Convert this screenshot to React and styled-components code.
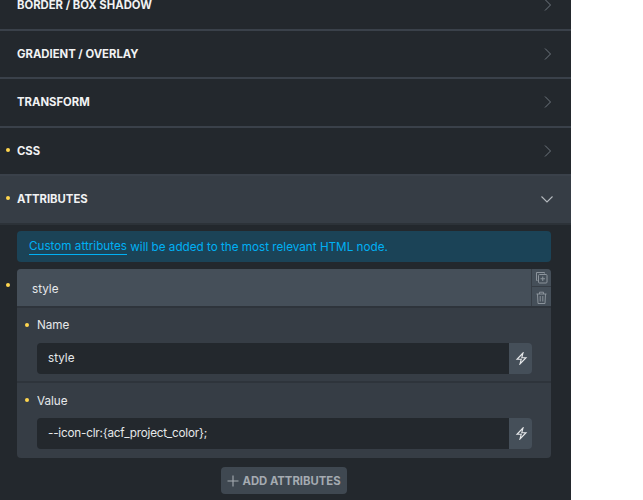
import React from "react";
import styled, { createGlobalStyle } from "styled-components";

const Global = createGlobalStyle`
  html, body { margin: 0; padding: 0; background: #fff; height: 500px; overflow: hidden; }
  body { font-family: Inter, "Liberation Sans", sans-serif; }
  * { box-sizing: border-box; }
`;
const Panel = styled.div`
  width: 571px; height: 500px; background: #23282d; overflow: hidden;
  display: flex; flex-direction: column;
`;
const Sections = styled.div`margin-top: -18px; display: flex; flex-direction: column;`;
const Row = styled.div`
  position: relative; height: 48.5px; flex: none; display: flex; align-items: center; justify-content: space-between;
  padding: 0 17px;
  background: ${p => (p.$open ? "#363d45" : "#23282d")};
  border-bottom: 2px solid ${p => (p.$open ? "#2c3238" : "#3a414a")};
`;
const RowTitle = styled.span`
  font-size: 11.3px; font-weight: 700; letter-spacing: 0; color: #f1f2f3; text-transform: uppercase;
`;
const Dot = styled.i`
  position: absolute; left: ${p => p.$left ?? 6}px; top: ${p => p.$top ?? "50%"};
  width: 4px; height: 4px; margin-top: -3px; border-radius: 50%; background: #ffd64f;
`;
const Body = styled.div`padding: 6px 20px 0 17px; display: flex; flex-direction: column; align-items: stretch;`;
const Notice = styled.div`
  height: 31px; border-radius: 4px; background: #1b4357; color: #00b0f4; font-size: 11.7px;
  padding: 1px 12px 0; display: flex; align-items: center; white-space: pre;
`;
const NoticeLink = styled.span`border-bottom: 1px solid #00b0f4; line-height: 15px;`;
const Card = styled.div`position: relative; margin-top: 7px; border-radius: 4px; background: #363d45; height: 189px;`;
const CardHead = styled.div`
  height: 39px; display: flex; background: #454f59; border-radius: 4px 4px 0 0;
  border-bottom: 2px solid #2e343b;
`;
const CardTitle = styled.div`
  flex: 1; font-size: 11.7px; color: #e6e8ea; padding: 3px 15px 0; display: flex; align-items: center;
`;
const Actions = styled.div`width: 20px; display: flex; flex-direction: column; border-left: 1px solid #363d45;`;
const Action = styled.div`
  flex: 1; display: flex; align-items: center; justify-content: center; color: #8b939b;
  padding-top: 1px;
  & + & { border-top: 1px solid #363d45; padding-top: 2px; }
`;
const Field = styled.div`
  position: relative; padding: 0 19px 0 20px; height: ${p => p.$h}px;
  border-top: ${p => (p.$line ? "2px solid #2e343b" : "0")};
`;
const Label = styled.div`
  font-size: 11.7px; color: #e6e8ea; height: 34px; margin-bottom: 1px; display: flex; align-items: center;
  padding-top: ${p => p.$shift ?? 0}px;
`;
const InputRow = styled.div`display: flex; height: 31px;`;
const Input = styled.div`
  flex: 1; background: #23282d; border-radius: 4px 0 0 4px; color: #e6e8ea; font-size: 11.7px;
  letter-spacing: ${p => (p.$tight ? "-0.2px" : "0")};
  padding: 0 11px; display: flex; align-items: center;
`;
const Bolt = styled.div`
  width: 23px; background: #454f59; border-radius: 0 4px 4px 0; color: #e6e8ea;
  padding-left: 1px; display: flex; align-items: center; justify-content: center;
`;
const AddWrap = styled.div`display: flex; justify-content: center; margin-top: 9px;`;
const AddButton = styled.div`
  width: 126px; height: 27px; background: #3f4851; border-radius: 4px; display: flex; align-items: center; justify-content: center; gap: 3px;
  color: #a5abb1; font-size: 11.3px; font-weight: 700; padding-top: 1px;
`;
const Icon = styled.svg`display: block; fill: none; stroke: currentColor;`;
const Chevron = styled(Icon)`color: #6f777f;`;
const OpenChevron = styled(Icon)`color: #b5babf;`;

const Right = () => (
  <Chevron width="14" height="14" viewBox="0 0 14 14" strokeWidth="1"><path d="M5 1.5 10.5 7 5 12.5" /></Chevron>
);
const Down = () => (
  <OpenChevron width="14" height="14" viewBox="0 0 14 14" strokeWidth="1.1"><path d="M1.5 4.5 7 10l5.5-5.5" /></OpenChevron>
);
const BoltIcon = () => (
  <Icon width="13" height="13" viewBox="0 0 13 13" strokeWidth="1.1" strokeLinejoin="miter">
    <path d="M8 1 2 7.3h4.2L5 12l6-6.3H6.8L8 1Z" />
  </Icon>
);
const CopyIcon = () => (
  <Icon width="13" height="13" viewBox="0 0 13 13" strokeWidth="1">
    <path d="M2.5 9.5h-1v-8h8v1" />
    <rect x="3.5" y="3.5" width="8.5" height="8.5" rx="1" />
    <path d="M7.75 5.5v4.5M5.5 7.75H10" />
  </Icon>
);
const TrashIcon = () => (
  <Icon width="13" height="13" viewBox="0 0 13 13" strokeWidth="1">
    <path d="M1.5 3h10M4.5 3V1.2h4V3M2.5 3l.5 9.5h7l.5-9.5M5.2 5v5.5M7.8 5v5.5" />
  </Icon>
);
const Plus = () => (
  <Icon width="12" height="12" viewBox="0 0 12 12" strokeWidth="1.1"><path d="M6 .5v11M.5 6h11" /></Icon>
);

const titles = [
  ["Border / Box Shadow", false],
  ["Gradient / Overlay", false],
  ["Transform", false],
  ["CSS", true],
];

export default function App() {
  return (
    <>
      <Global />
      <Panel>
        <Sections>
          {titles.map(([t, dot]) => (
            <Row key={t}>
              {dot && <Dot />}
              <RowTitle>{t}</RowTitle>
              <Right />
            </Row>
          ))}
          <Row $open>
            <Dot />
            <RowTitle>Attributes</RowTitle>
            <Down />
          </Row>
        </Sections>
        <Body>
          <Notice>
            <NoticeLink>Custom attributes</NoticeLink> will be added to the most relevant HTML node.
          </Notice>
          <Card>
            <Dot $left={-11} $top="17px" />
            <CardHead>
              <CardTitle>style</CardTitle>
              <Actions>
                <Action><CopyIcon /></Action>
                <Action><TrashIcon /></Action>
              </Actions>
            </CardHead>
            <Field $h={73}>
              <Dot $left={8} $top="18px" />
              <Label>Name</Label>
              <InputRow>
                <Input>style</Input>
                <Bolt><BoltIcon /></Bolt>
              </InputRow>
            </Field>
            <Field $h={77} $line>
              <Dot $left={8} $top="18px" />
              <Label $shift={2}>Value</Label>
              <InputRow>
                <Input $tight>--icon-clr:{"{"}acf_project_color{"}"};</Input>
                <Bolt><BoltIcon /></Bolt>
              </InputRow>
            </Field>
          </Card>
          <AddWrap>
            <AddButton><Plus />ADD ATTRIBUTES</AddButton>
          </AddWrap>
        </Body>
      </Panel>
    </>
  );
}
